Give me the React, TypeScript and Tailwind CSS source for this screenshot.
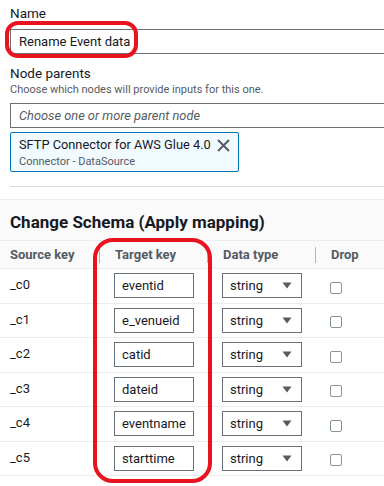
import React from 'react';

const rows = [
  { src: '_c0', target: 'eventid' },
  { src: '_c1', target: 'e_venueid' },
  { src: '_c2', target: 'catid' },
  { src: '_c3', target: 'dateid' },
  { src: '_c4', target: 'eventname' },
  { src: '_c5', target: 'starttime' },
];

function Caret() {
  return (
    <svg width="10" height="7" viewBox="0 0 10 7" className="shrink-0">
      <path d="M0.5 0.5h9L5 6.5z" fill="#545b64" />
    </svg>
  );
}

function CloseIcon() {
  return (
    <svg width="13" height="13" viewBox="0 0 13 13" className="shrink-0">
      <path d="M1 1l11 11M12 1L1 12" stroke="#545b64" strokeWidth="2" fill="none" />
    </svg>
  );
}

export default function App() {
  return (
    <div
      className="relative w-[384px] h-[486px] overflow-hidden bg-white text-[#16191f]"
      style={{ fontFamily: 'Roboto, "Noto Sans", sans-serif' }}
    >
      {/* form area */}
      <div className="pl-[10px] pt-[3px]">
        <div className="text-[13.5px] leading-[20px]">Name</div>
        <div className="mt-[6px] w-[420px] h-[25px] border border-[#687078] flex items-center pl-[8px] text-[13px]">
          Rename Event data
        </div>
        <div className="mt-[9px] text-[13.5px] leading-[20px]">Node parents</div>
        <div className="text-[11px] leading-[14px] text-[#545b64] whitespace-nowrap">
          Choose which nodes will provide inputs for this one.
        </div>
        <div className="mt-[6px] w-[420px] h-[25px] border border-[#687078] flex items-center pl-[8px] text-[12.8px] italic text-[#545b64]">
          Choose one or more parent node
        </div>
        <div className="mt-[4px] w-[229px] h-[40px] border border-[#0073bb] bg-[#f1faff] rounded-[2px] flex items-start justify-between pl-[8px] pr-[8px] pt-[2px]">
          <div className="flex flex-col whitespace-nowrap">
            <span className="text-[12.8px] leading-[19px]">SFTP Connector for AWS Glue 4.0</span>
            <span className="text-[11px] leading-[16px] text-[#545b64]">Connector - DataSource</span>
          </div>
          <div className="mt-[4px]">
            <CloseIcon />
          </div>
        </div>
        <div className="mt-[14px] h-px bg-[#d5dbdb]" />
      </div>

      {/* schema section */}
      <div className="mt-[12px] border-t border-[#eaeded] bg-[#fafafa]">
        <h2 className="pl-[10px] pt-[5px] h-[40px] flex items-center text-[17px] font-bold whitespace-nowrap">
          Change Schema (Apply mapping)
        </h2>
        <div className="border-t border-[#eaeded]">
          <div className="grid grid-cols-[99px_108px_108px_1fr] h-[28px] items-center border-b border-[#eaeded] text-[13px] font-bold text-[#545b64]">
            <div className="pl-[10px]">Source key</div>
            <div className="pl-[15px] border-l border-[#aab7b8] h-[16px] flex items-center">Target key</div>
            <div className="pl-[15px] border-l border-[#aab7b8] h-[16px] flex items-center">Data type</div>
            <div className="pl-[15px] border-l border-[#aab7b8] h-[16px] flex items-center">Drop</div>
          </div>
          <div className="bg-white">
            {rows.map((r) => (
              <div
                key={r.src}
                className="grid grid-cols-[99px_108px_108px_1fr] h-[34.5px] items-center border-b border-[#eaeded] text-[13px]"
              >
                <div className="pl-[10px] pb-[2px]">{r.src}</div>
                <div className="pl-[15px]">
                  <div className="w-[80px] h-[25px] border border-[#687078] flex items-center pl-[7px] whitespace-nowrap overflow-hidden">
                    {r.target}
                  </div>
                </div>
                <div className="pl-[15px]">
                  <div className="w-[80px] h-[25px] border border-[#687078] flex items-center justify-between pl-[7px] pr-[9px]">
                    <span>string</span>
                    <Caret />
                  </div>
                </div>
                <div className="pl-[15px]">
                  <div className="w-[12px] h-[12px] mt-[4px] border border-[#879596] rounded-[2px] bg-white" />
                </div>
              </div>
            ))}
          </div>
        </div>
      </div>

      {/* red annotations */}
      <div className="absolute left-[5px] top-[21px] w-[133px] h-[37px] border-[4px] border-[#e8131f] rounded-[13px] pointer-events-none" />
      <div className="absolute left-[93px] top-[238px] w-[119px] h-[245px] border-[4px] border-[#e8131f] rounded-[20px] pointer-events-none" />
    </div>
  );
}
